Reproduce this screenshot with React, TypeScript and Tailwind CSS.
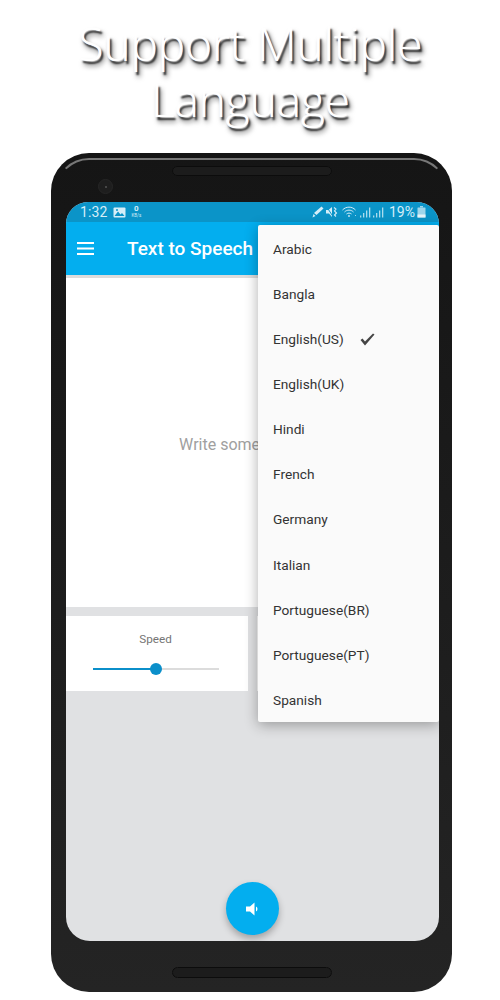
import React from "react";

const langs = ["Arabic","Bangla","English(US)","English(UK)","Hindi","French","Germany","Italian","Portuguese(BR)","Portuguese(PT)","Spanish"];

function Bars({ cls }: { cls: string }) {
  return (
    <svg width="11" height="11" viewBox="0 0 11 11" fill="currentColor" className={`opacity-80 ${cls}`}>
      <rect x="0" y="8.5" width="1.3" height="2" />
      <rect x="3" y="6" width="1.3" height="4.5" />
      <rect x="6" y="3.5" width="1.3" height="7" />
      <rect x="9" y="0.5" width="1.3" height="10" />
    </svg>
  );
}

function StatusLeft() {
  return (
    <div className="flex items-center">
      <span className="text-[14px] leading-none text-[#d5eef8] tracking-[0.1px]">1:32</span>
      <svg width="13" height="11" viewBox="0 0 13 11" className="ml-[6px]">
        <rect x="0.5" y="0.5" width="12" height="10" rx="1" fill="#d5eef8" />
        <path d="M1.5 9 L5 4.5 L7.5 7.5 L9 6 L11.5 9 Z" fill="#0b94c8" />
        <circle cx="4" cy="3" r="1" fill="#0b94c8" />
      </svg>
      <div className="ml-[5px] flex flex-col items-center leading-none text-[#d5eef8]">
        <span className="text-[8px] font-bold leading-[8px]">0</span>
        <span className="text-[4.5px] leading-[6px]">KB/s</span>
      </div>
    </div>
  );
}

function StatusRight() {
  return (
    <div className="flex items-center text-[#d5eef8]">
      <svg width="12" height="12" viewBox="0 0 12 12" fill="currentColor">
        <path d="M9.5 0.5 L11.5 2.5 L4.5 9 L2 7 Z" />
        <path d="M1.5 8 L3.5 10 L0.5 11.5 Z" />
      </svg>
      <svg width="13" height="12" viewBox="0 0 13 12" fill="currentColor" className="ml-[2px]">
        <path d="M0 4 H2.5 L6 1 V11 L3 7.5 H0 Z" />
        <path d="M0.5 0.5 L7 10.5" stroke="#0b94c8" strokeWidth="1" />
        <path d="M8 1.5 L10 3 L8.5 5 L10.5 7 L8.5 9 L10 10.5" fill="none" stroke="currentColor" strokeWidth="1.1" />
      </svg>
      <svg width="15" height="12" viewBox="0 0 15 12" fill="none" stroke="currentColor" className="ml-[3px]">
        <path d="M0.5 4 C4 0.2 10 0.2 13.5 4" strokeWidth="1" />
        <path d="M2.5 6 C5 3.5 9 3.5 11.5 6" strokeWidth="1" />
        <path d="M4.5 8 C6 6.8 8 6.8 9.5 8" strokeWidth="1" />
        <circle cx="7" cy="10" r="0.9" fill="currentColor" stroke="none" />
        <circle cx="13.5" cy="9.5" r="0.5" fill="currentColor" stroke="none" />
      </svg>
      <Bars cls="ml-[3px]" />
      <Bars cls="ml-[2px]" />
      <span className="ml-[5px] text-[14px] leading-none">19%</span>
      <svg width="9" height="12" viewBox="0 0 9 12" className="ml-[2px]">
        <rect x="3" y="0" width="3" height="1.5" fill="#9fd5ea" />
        <rect x="0.5" y="1.5" width="8" height="10" rx="0.5" fill="#9fd5ea" />
        <rect x="0.5" y="8.5" width="8" height="3" fill="#e8f6fb" />
      </svg>
    </div>
  );
}

function Grille({ cls }: { cls: string }) {
  return (
    <div
      className={`w-[160px] rounded-full border border-[#0c0c0c] bg-[#3a3a3a] bg-[radial-gradient(#1a1a1a_0.7px,transparent_0.8px)] bg-[length:2px_2px] ${cls}`}
    />
  );
}

export default function App() {
  return (
    <div className="w-[500px] h-[1000px] bg-white overflow-hidden font-['Roboto',sans-serif]">
      <h1 className="pt-[15px] pl-[1px] h-[153px] text-center text-white text-[45.8px] leading-[56px] font-['Open_Sans',sans-serif] font-light [text-shadow:0_0_1px_#fff,2px_3px_2px_#222,3px_5px_5px_#666]">
        Support Multiple
        <br />
        Language
      </h1>

      <div className="relative ml-[51px] w-[401px] h-[839px] rounded-[38px] bg-gradient-to-b from-[#151515] to-[#242424] flex flex-col items-center">
        <div className="absolute inset-x-[4px] top-[5px] h-[40px] rounded-t-[34px] border-t-2 border-x-2 border-t-[#777] border-x-transparent" />
        <Grille cls="mt-[13px] h-[10px] shrink-0" />
        <div className="absolute left-[47px] top-[26px] size-[15px] rounded-full bg-[#1e1e1e] border border-[#262626] flex items-center justify-center">
          <div className="size-[2px] rounded-full bg-[#555]" />
        </div>

        <div className="relative mt-[26px] w-[373px] h-[739px] ml-[2px] shrink-0 rounded-[22px] rounded-b-[24px] overflow-hidden bg-[#e0e1e3] flex flex-col">
          <div className="h-[20px] shrink-0 bg-[#0b94c8] flex items-center justify-between pl-[14px] pr-[13px]">
            <StatusLeft />
            <StatusRight />
          </div>
          <div className="h-[53px] shrink-0 bg-[#03aeef] flex items-center pl-[11px]">
            <svg width="17" height="13" viewBox="0 0 17 13" fill="#fff">
              <rect x="0" y="0" width="17" height="2" />
              <rect x="0" y="5.5" width="17" height="2" />
              <rect x="0" y="11" width="17" height="2" />
            </svg>
            <span className="ml-[33px] mt-[1px] text-[#fff] text-[19px] font-medium whitespace-nowrap">Text to Speech</span>
          </div>
          <div className="h-[3px] shrink-0 bg-[#dcdcdc]" />
          <div className="h-[329px] shrink-0 bg-white flex items-center justify-center">
            <span className="mt-[4px] text-[16px] text-[#a0a0a0] whitespace-nowrap">Write some text here</span>
          </div>
          <div className="mt-[9px] grid grid-cols-2 gap-[9px] shrink-0">
            <div className="h-[75px] w-[182px] bg-white flex flex-col items-center pr-[3px]">
              <span className="mt-[15px] text-[11.7px] leading-[16px] text-[#757575]">Speed</span>
              <div className="relative mt-[21px] w-[126px] h-[2px] bg-[#dcdcdc]">
                <div className="h-full w-[63px] bg-[#0b8fca]" />
                <div className="absolute left-[57px] top-[-5px] size-[12px] rounded-full bg-[#0b8fca]" />
              </div>
            </div>
            <div className="h-[75px] bg-white" />
          </div>
          <div className="mt-auto mb-[6px] flex justify-center">
            <button className="size-[53px] rounded-full bg-[#03aeef] shadow-[0_4px_7px_rgba(0,0,0,0.28)] flex items-center justify-center">
              <svg width="16" height="16" viewBox="0 0 16 16" fill="#fff">
                <path d="M1 5.5 H5 L9.5 1.5 V14.5 L5 10.5 H1 Z" />
                <path d="M11 5.5 C13 6.5 13 9.5 11 10.5 Z" />
              </svg>
            </button>
          </div>

          <div className="absolute left-[192px] top-[23px] w-[181px] h-[497px] bg-[#fafafa] rounded-[2px] pt-[1.6px] shadow-[0_3px_14px_rgba(0,0,0,0.32)]">
            {langs.map((l, i) => (
              <div key={l} className="h-[45.1px] flex items-center pl-[15px] text-[13.7px] text-[#333] relative">
                {l}
                {i === 2 && (
                  <svg width="15" height="13" viewBox="0 0 15 13" className="absolute left-[102px] top-[16px]" fill="#444">
                    <path d="M0.5 7 L2.5 5.5 L5 8.5 L13 0.5 L14.5 1.5 L5 12.5 Z" />
                  </svg>
                )}
              </div>
            ))}
          </div>
        </div>

        <Grille cls="mt-[26px] h-[11px] shrink-0 ml-[1px]" />
      </div>
    </div>
  );
}
